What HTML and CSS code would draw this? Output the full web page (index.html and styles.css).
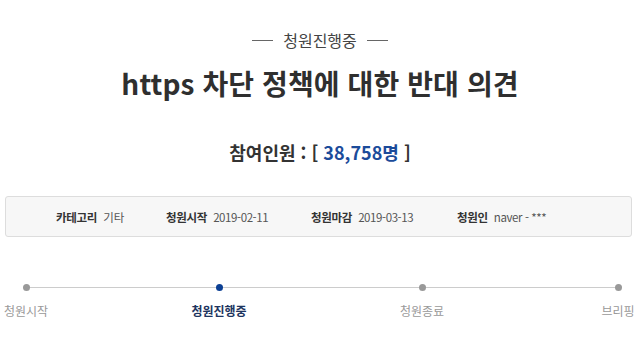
FILE: index.html
```html
<!DOCTYPE html>
<html lang="ko">
<head>
<meta charset="utf-8">
<link rel="stylesheet" href="styles.css">
</head>
<body>
<div class="page">
  <div class="status">
    <span class="dash"></span>
    <span class="status-text">청원진행중</span>
    <span class="dash"></span>
  </div>
  <h1 class="title">https 차단 정책에 대한 반대 의견</h1>
  <p class="count">참여인원 : [ <span class="num">38,758명</span> ]</p>
  <ul class="info">
    <li><b>카테고리</b><span>기타</span></li>
    <li><b>청원시작</b><span class="date">2019-02-11</span></li>
    <li><b>청원마감</b><span class="date">2019-03-13</span></li>
    <li><b>청원인</b><span class="date">naver - ***</span></li>
  </ul>
  <div class="steps">
    <div class="line"></div>
    <div class="step s1"><i class="dot"></i><span>청원시작</span></div>
    <div class="step s2 active"><i class="dot"></i><span>청원진행중</span></div>
    <div class="step s3"><i class="dot"></i><span>청원종료</span></div>
    <div class="step s4"><i class="dot"></i><span>브리핑</span></div>
  </div>
</div>
</body>
</html>
```
FILE: styles.css
```css
* { box-sizing: border-box; }
html, body { margin: 0; padding: 0; background: #fff; }
body {
  font-family: "Noto Sans CJK KR", "Noto Sans", sans-serif;
  color: #333;
  width: 640px;
  height: 358px;
  overflow: hidden;
}
.page { padding-top: 30px; }
.status {
  display: flex;
  justify-content: center;
  align-items: center;
  gap: 10px;
  height: 20px;
}
.dash { width: 21px; height: 1px; background: #666; }
.status-text { font-size: 16px; line-height: 20px; color: #444; }
.title {
  margin: 16px 0 0;
  text-align: center;
  font-size: 28px;
  line-height: 34px;
  font-weight: 700;
  color: #2f2f2f;
  letter-spacing: 0.1px;
}
.count {
  margin: 39px 0 0;
  text-align: center;
  font-size: 18px;
  line-height: 26px;
  font-weight: 700;
  color: #333;
}
.count .num { color: #1b4b9a; }
.info {
  list-style: none;
  margin: 31px 8px 0 5px;
  padding: 0 0 0 50px;
  height: 41px;
  border: 1px solid #ddd;
  border-radius: 3px;
  background: #f7f7f7;
  display: grid;
  grid-template-columns: 110px 145px 146px auto;
  align-items: center;
  font-size: 11.5px;
}
.info li { display: flex; align-items: center; gap: 6px; white-space: nowrap; }
.info b { font-weight: 700; color: #333; letter-spacing: -0.3px; }
.info span { color: #555; }
.info .date { letter-spacing: -0.4px; }
.steps {
  position: relative;
  margin-top: 47px;
  display: grid;
  grid-template-columns: 40px 147px 52px 157px 40px 161px 30px;
  margin-left: 6px;
}
.line {
  position: absolute;
  left: 20px;
  width: 592px;
  top: 3px;
  height: 1px;
  background: #ccc;
}
.step {
  display: flex;
  flex-direction: column;
  align-items: center;
  white-space: nowrap;
  font-size: 12px;
  color: #999;
}
.s1 { grid-column: 1; }
.s2 { grid-column: 3; }
.s3 { grid-column: 5; }
.s4 { grid-column: 7; }
.dot {
  position: relative;
  width: 7px;
  height: 7px;
  border-radius: 50%;
  background: #999;
}
.step span { margin-top: 11px; line-height: 18px; }
.active .dot { background: #0b3f94; }
.active span { color: #1e3560; font-weight: 700; }
```
